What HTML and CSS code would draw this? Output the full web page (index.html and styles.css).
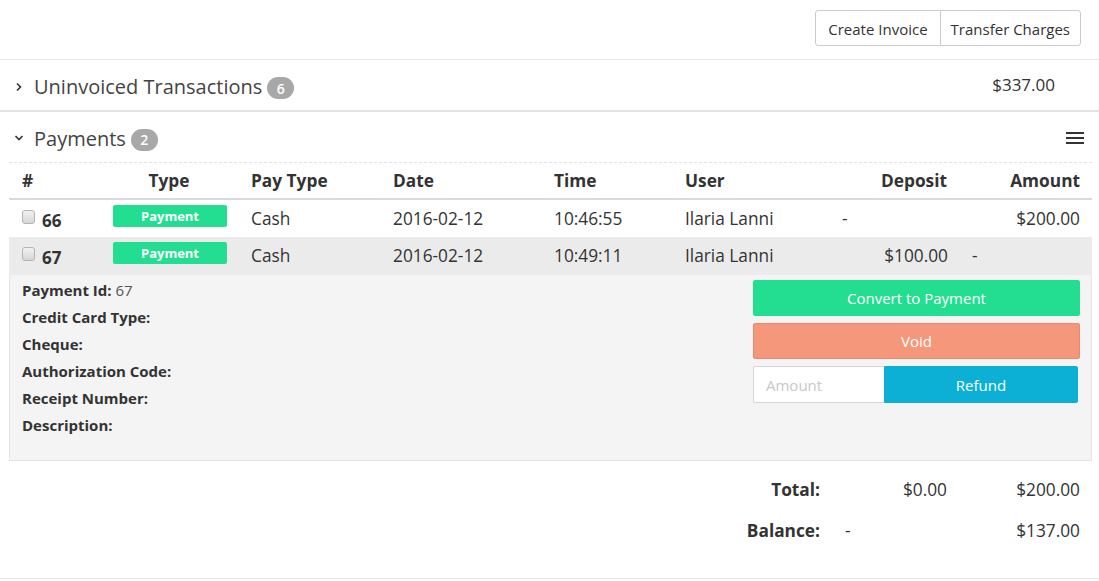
FILE: index.html
```html
<!DOCTYPE html>
<html>
<head>
<meta charset="utf-8">
<link rel="stylesheet" href="styles.css">
</head>
<body>
<div class="page">
  <div class="toolbar">
    <div class="btn-group">
      <button class="btn">Create Invoice</button>
      <button class="btn">Transfer Charges</button>
    </div>
  </div>

  <div class="section sec-uninv">
    <div class="sec-head">
      <span class="chev">
        <svg width="10" height="10" viewBox="0 0 10 10"><path d="M3 1.5 L6.5 5 L3 8.5" fill="none" stroke="#333" stroke-width="1.6"/></svg>
      </span>
      <span class="sec-title">Uninvoiced Transactions</span>
      <span class="badge">6</span>
      <span class="sec-amount">$337.00</span>
    </div>
  </div>

  <div class="section sec-pay">
    <div class="sec-head pay-head">
      <span class="chev">
        <svg width="10" height="10" viewBox="0 0 10 10"><path d="M1.5 3 L5 6.5 L8.5 3" fill="none" stroke="#333" stroke-width="1.6"/></svg>
      </span>
      <span class="sec-title">Payments</span>
      <span class="badge">2</span>
      <span class="menu">
        <svg width="18" height="14" viewBox="0 0 18 14"><rect x="0" y="1" width="18" height="2" fill="#333"/><rect x="0" y="6" width="18" height="2" fill="#333"/><rect x="0" y="11" width="18" height="2" fill="#333"/></svg>
      </span>
    </div>

    <div class="table">
      <div class="tr th">
        <div class="c-num">#</div>
        <div class="c-type center">Type</div>
        <div class="c-pt">Pay Type</div>
        <div class="c-date">Date</div>
        <div class="c-time">Time</div>
        <div class="c-user">User</div>
        <div class="c-dep right">Deposit</div>
        <div class="c-amt right">Amount</div>
      </div>
      <div class="tr row">
        <div class="c-num"><span class="cb"></span><b>66</b></div>
        <div class="c-type"><span class="tag">Payment</span></div>
        <div class="c-pt">Cash</div>
        <div class="c-date">2016-02-12</div>
        <div class="c-time">10:46:55</div>
        <div class="c-user">Ilaria Lanni</div>
        <div class="c-dep"><span class="dash-l">-</span></div>
        <div class="c-amt right">$200.00</div>
      </div>
      <div class="tr row alt">
        <div class="c-num"><span class="cb"></span><b>67</b></div>
        <div class="c-type"><span class="tag">Payment</span></div>
        <div class="c-pt">Cash</div>
        <div class="c-date">2016-02-12</div>
        <div class="c-time">10:49:11</div>
        <div class="c-user">Ilaria Lanni</div>
        <div class="c-dep right">$100.00</div>
        <div class="c-amt"><span class="dash-a">-</span></div>
      </div>
      <div class="detail">
        <div class="fields">
          <div><b>Payment Id:</b> <span class="val">67</span></div>
          <div><b>Credit Card Type:</b></div>
          <div><b>Cheque:</b></div>
          <div><b>Authorization Code:</b></div>
          <div><b>Receipt Number:</b></div>
          <div><b>Description:</b></div>
        </div>
        <div class="actions">
          <button class="abtn green">Convert to Payment</button>
          <button class="abtn orange">Void</button>
          <div class="refund">
            <input class="amount" placeholder="Amount">
            <button class="abtn blue">Refund</button>
          </div>
        </div>
      </div>
    </div>

    <div class="totals">
      <div class="trow">
        <div class="t-label">Total:</div>
        <div class="t-dep right">$0.00</div>
        <div class="t-amt right">$200.00</div>
      </div>
      <div class="trow">
        <div class="t-label">Balance:</div>
        <div class="t-dep"><span class="dash-b">-</span></div>
        <div class="t-amt right">$137.00</div>
      </div>
    </div>
  </div>
</div>
</body>
</html>
```

FILE: styles.css
```css
* { box-sizing: border-box; }
html, body { margin: 0; padding: 0; background: #fff; }
body {
  font-family: "Open Sans", "Liberation Sans", sans-serif;
  color: #333;
  font-size: 17.3px;
  width: 1099px;
  height: 581px;
  overflow: hidden;
}
.page { display: flex; flex-direction: column; }

.toolbar {
  display: flex;
  justify-content: flex-end;
  padding: 10px 18px 13px 0;
  border-bottom: 1px solid #e6e6e6;
}
.btn-group { display: flex; }
.btn {
  font-family: inherit;
  font-size: 15px;
  color: #333;
  background: #fff;
  border: 1px solid #ccc;
  height: 36px;
  padding: 2px 12px 0 12px;
  cursor: pointer;
}
.btn:first-child { border-radius: 3px 0 0 3px; }
.btn:last-child { border-radius: 0 3px 3px 0; margin-left: -1px; padding: 2px 10px 0; }

.sec-uninv { border-bottom: 2px solid #e3e3e3; }
.sec-head {
  display: flex;
  align-items: center;
  height: 50px;
  padding-left: 14px;
  padding-top: 3px;
}
.chev { width: 12px; display: flex; align-items: center; margin-right: 8px; }
.sec-title { font-size: 20px; color: #444; }
.badge {
  display: inline-flex;
  align-items: center;
  justify-content: center;
  background: #a8a8a8;
  color: #fff;
  font-size: 14px;
  font-weight: 600;
  height: 22px;
  min-width: 27px;
  padding: 0 8px;
  border-radius: 11px;
  margin-left: 5px;
  margin-top: 3px;
}
.sec-amount { margin-left: auto; margin-right: 44px; font-size: 17px; margin-top: -4px; }

.sec-pay { padding: 0 7px 0 9px; border-bottom: 1px solid #e6e6e6; }
.pay-head { height: 51px; padding-left: 5px; padding-top: 2px; border-bottom: 1px dashed #e2e2e2; }
.menu { margin-left: auto; margin-right: 8px; display: flex; margin-top: 0; }

.table { display: flex; flex-direction: column; }
.tr { display: flex; align-items: center; }
.th { height: 37px; font-weight: 700; border-bottom: 2px solid #dadada; padding-bottom: 1px; }
.row { height: 37px; padding-bottom: 1px; }
.alt { background: #ebebeb; height: 38px; padding-bottom: 2px; }
.c-num { width: 104px; padding-left: 13px; display: flex; align-items: center; }
.c-type { width: 138px; }
.c-pt { width: 142px; }
.c-date { width: 161px; }
.c-time { width: 131px; }
.c-user { width: 150px; }
.c-dep { width: 113px; }
.c-amt { width: 133px; padding-right: 1px; }
.center { text-align: center; }
.right { text-align: right; }
.c-type.center { padding-right: 26px; }
.th .c-dep { padding-right: 1px; }
.row .c-num b { font-size: 17px; margin-top: 4px; }

.cb {
  width: 13px; height: 14px;
  border: 1px solid #b4b4b4;
  border-radius: 3px;
  background: linear-gradient(#f2f2f2, #d6d6d6);
  margin-right: 7px;
  margin-top: -3px;
}
.tag {
  display: flex;
  align-items: center;
  justify-content: center;
  width: 114px;
  height: 22px;
  background: #23de91;
  color: #fff;
  font-size: 13px;
  font-weight: 700;
  border-radius: 2px;
  margin-top: -4px;
}
.dash-l { padding-left: 7px; }
.dash-a { padding-left: 24px; }

.detail {
  display: flex;
  justify-content: space-between;
  background: #f4f4f4;
  border: 1px solid #e5e5e5;
  border-top: none;
  height: 186px;
  padding: 4px 11px 0 12px;
}
.fields { font-size: 15px; display: flex; flex-direction: column; }
.fields div { height: 27px; line-height: 22px; }
.fields b { font-weight: 700; }
.val { color: #555; }
.actions { width: 327px; display: flex; flex-direction: column; gap: 7px; padding-top: 1px; }
.abtn {
  font-family: inherit;
  font-size: 15px;
  color: #fff;
  border: 1px solid transparent;
  border-radius: 2px;
  height: 36px;
  cursor: pointer;
}
.green { background: #23de91; border-color: #23de91; }
.orange { background: #f5977a; border-color: #e98a6e; }
.blue { background: #0bb0d4; border-color: #0bb0d4; flex: 1; margin-right: 2px; font-size: 15px; border-radius: 0 2px 2px 0; }
.refund { display: flex; height: 37px; }
.amount {
  width: 131px;
  height: 37px;
  border: 1px solid #d6d6d6;
  border-right: none;
  font-family: inherit;
  font-size: 15px;
  padding: 0 12px;
  background: #fff;
  border-radius: 2px 0 0 2px;
}
.amount::placeholder { color: #c8c8c8; }
.blue { height: 37px; }

.totals { display: flex; flex-direction: column; padding: 8px 0 28px; }
.trow { display: flex; height: 40px; align-items: center; }
.trow + .trow { margin-top: 1px; }
.t-label { width: 811px; text-align: right; font-weight: 700; }
.t-dep { width: 127px; }
.t-amt { width: 133px; }
.dash-b { padding-left: 25px; }
```
